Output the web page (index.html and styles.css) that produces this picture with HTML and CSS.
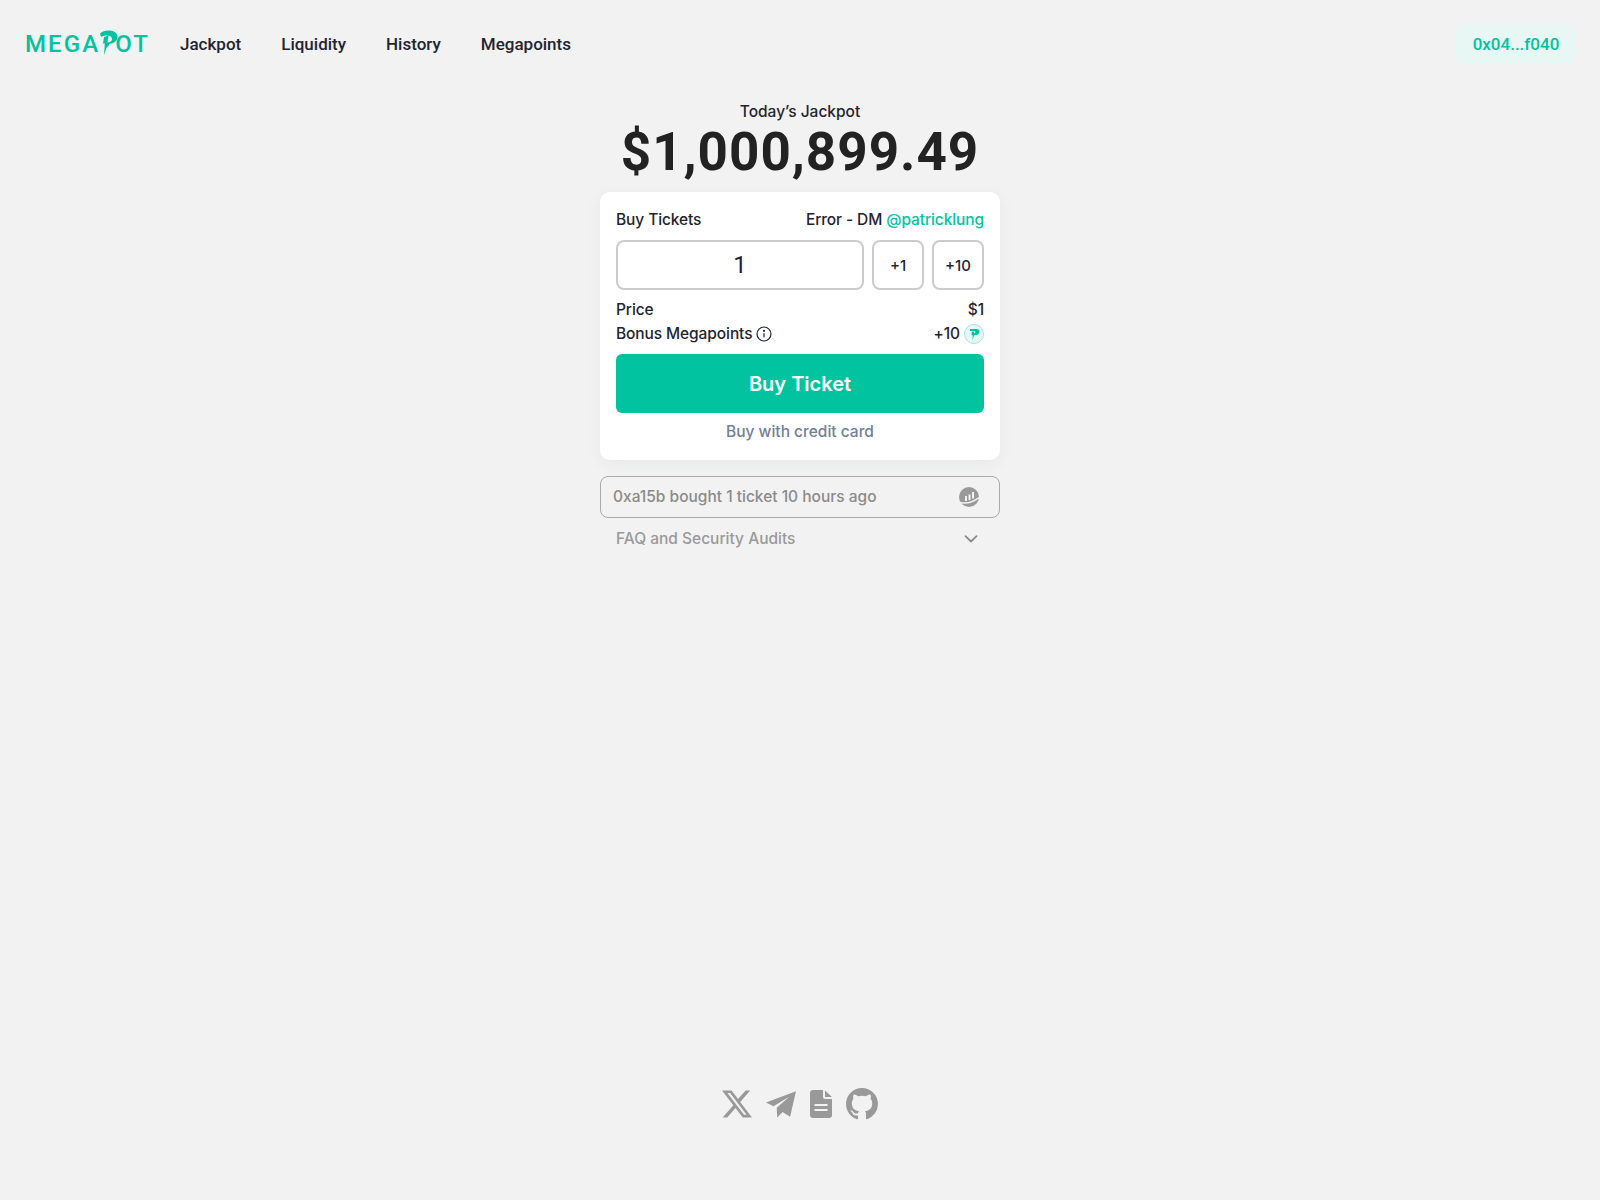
FILE: index.html
```html
<!DOCTYPE html>
<html lang="en">
<head>
<meta charset="utf-8">
<title>Megapot</title>
<link rel="stylesheet" href="styles.css">
</head>
<body>
<div class="page">
  <header class="topbar">
    <div class="brand">
      <a class="logo"><span>MEGA</span><svg class="logo-p" viewBox="0 0 20 26" width="20" height="26"><path fill="#02c39f" d="M1 3.5C3 1.500 6 .5 9.500.5c5.500 0 9 2.500 9 6.500 0 4-3.500 6.500-8 6.800l-1.500 3-1 0 .5-1.500-3.500 9.700.8-11.500-1.800 0 1-6.500 4.500-1.500-1 7c2.500-.2 4.500-1.500 4.500-3.500 0-2.500-2.500-3.500-5-3.500-2.500 0-4 .5-6 1.500z"/></svg><span class="logo-end">OT</span></a>
      <nav class="nav">
        <a>Jackpot</a>
        <a>Liquidity</a>
        <a>History</a>
        <a>Megapoints</a>
      </nav>
    </div>
    <button class="wallet">0x04...f040</button>
  </header>

  <main class="main">
    <div class="hero">
      <div class="hero-label">Today’s Jackpot</div>
      <div class="hero-amount">$1,000,899.49</div>
    </div>

    <section class="card">
      <div class="row row-head">
        <span>Buy Tickets</span>
        <span>Error - DM <a class="accent">@patricklung</a></span>
      </div>
      <div class="qty">
        <div class="qty-input">1</div>
        <button class="qty-btn">+1</button>
        <button class="qty-btn">+10</button>
      </div>
      <div class="row"><span>Price</span><span>$1</span></div>
      <div class="row">
        <span class="with-icon">Bonus Megapoints
          <svg class="info" viewBox="0 0 16 16" width="16" height="16" fill="none" stroke="#1f2430" stroke-width="1.200"><circle cx="8" cy="8" r="7"/><path d="M8 7.200v4"/><circle cx="8" cy="4.800" r=".5" fill="#1f2430"/></svg>
        </span>
        <span class="with-icon">+10
          <span class="point"><svg viewBox="0 0 20 20" width="20" height="20"><circle cx="10" cy="10" r="9.500" fill="#e6f9f5" stroke="#a5e6d9" stroke-width="1"/><path fill="#02c39f" d="M6 5h6.500c1.800 0 3 1 3 2.800 0 2-1.500 3.200-3.500 3.200l-2 .2-1.500 5 .2-5H7.500l.3-3.700H10l-.2 1.600c1 0 1.700-.3 1.700-1.100 0-.7-.6-1-1.500-1H6z"/></svg></span>
        </span>
      </div>
      <button class="buy">Buy Ticket</button>
      <a class="credit">Buy with credit card</a>
    </section>

    <div class="ticker">
      <span>0xa15b bought 1 ticket 10 hours ago</span>
      <svg viewBox="0 0 20 20" width="20" height="20"><circle cx="10" cy="10" r="10" fill="#999"/><path fill="#f2f2f2" d="M6 9h2v5H6zM9.500 7.500h2V13h-2zM13 5h2v6.500h-2z"/><path d="M1 15.500c6 1.500 12 .5 19-5" fill="none" stroke="#f2f2f2" stroke-width="1.500"/></svg>
    </div>
    <div class="faq">
      <span>FAQ and Security Audits</span>
      <svg viewBox="0 0 14 8" width="14" height="8" fill="none" stroke="#8a8a8a" stroke-width="1.800" stroke-linecap="round" stroke-linejoin="round"><path d="M1.500 1.200 7 6.500l5.500-5.300"/></svg>
    </div>
  </main>

  <footer class="footer">
    <svg class="fi" viewBox="0 0 24 24" width="30" height="30"><path d="M18.901 1.153h3.680l-8.040 9.190L24 22.846h-7.406l-5.800-7.584-6.638 7.584H.474l8.600-9.830L0 1.154h7.594l5.243 6.932ZM17.610 20.644h2.039L6.486 3.240H4.298Z"/></svg>
    <svg class="fi" viewBox="0 0 28 26" width="30" height="28"><path d="M0 11.500 28 1 22.500 25 15.500 20.500 10.500 25.500 10 16.500 22 6 7 15Z"/></svg>
    <svg class="fi fi-doc" viewBox="0 0 22 28" width="22" height="28"><path fill-rule="evenodd" d="M3 0h10v7a2 2 0 0 0 2 2h7v16a3 3 0 0 1-3 3H3a3 3 0 0 1-3-3V3a3 3 0 0 1 3-3Zm1.500 14v2h13v-2Zm0 5v2h13v-2ZM15 .5 22 7h-7Z"/></svg>
    <svg class="fi" viewBox="0 0 16 16" width="32" height="32"><path d="M8 0C3.580 0 0 3.580 0 8c0 3.540 2.290 6.530 5.470 7.590.4.070.55-.17.55-.38 0-.19-.01-.82-.01-1.490-2.010.37-2.530-.49-2.690-.94-.09-.23-.48-.94-.82-1.130-.28-.15-.68-.52-.01-.53.630-.01 1.080.58 1.230.82.720 1.210 1.870.87 2.330.66.070-.52.280-.87.510-1.070-1.780-.2-3.640-.89-3.640-3.950 0-.87.310-1.590.820-2.150-.08-.2-.36-1.020.08-2.120 0 0 .67-.21 2.200.82.640-.18 1.320-.27 2-.27.680 0 1.360.09 2 .27 1.530-1.040 2.200-.82 2.200-.82.440 1.100.160 1.920.080 2.120.510.560.820 1.270.820 2.150 0 3.070-1.870 3.750-3.650 3.950.290.250.540.730.540 1.480 0 1.070-.01 1.930-.01 2.200 0 .21.150.46.550.38A8.013 8.013 0 0 0 16 8c0-4.420-3.580-8-8-8z"/></svg>
  </footer>
</div>
</body>
</html>
```
FILE: styles.css
```css
* { box-sizing: border-box; }
html, body { margin: 0; padding: 0; }
body {
  background: #f2f2f2;
  color: #1f2430;
  font-family: "Inter", "Noto Sans", sans-serif;
  font-size: 16px;
  line-height: 24px;
}
.page {
  min-height: 1200px;
  display: flex;
  flex-direction: column;
}
.topbar {
  display: flex;
  justify-content: space-between;
  align-items: center;
  padding: 24px 24px 24px 25px;
  height: 87px;
}
.brand { display: flex; align-items: center; gap: 25px; }
.logo {
  display: flex;
  align-items: center;
  width: 130px;
  height: 26px;
  font-family: "Roboto", sans-serif;
  font-size: 24px;
  font-weight: 500;
  letter-spacing: 2.100px;
  color: #02c39f;
  line-height: 26px;
}
.logo-p { flex: none; margin-left: -1px; margin-top: -1px; }
.logo-end { margin-left: -4px; }
.nav { display: flex; gap: 40px; }
.nav a {
  font-family: "Roboto", sans-serif;
  font-size: 17px;
  font-weight: 500;
  color: #1f2430;
}
.wallet {
  width: 120px;
  height: 40px;
  border: 0;
  border-radius: 8px;
  background: #e8f7f4;
  color: #02c39f;
  font-family: "Roboto", sans-serif;
  font-size: 17px;
  font-weight: 500;
  padding: 0;
}
.main {
  width: 400px;
  margin: 0 auto;
  display: flex;
  flex-direction: column;
}
.hero { text-align: center; margin-top: 13px; }
.hero-label { font-weight: 500; font-size: 15.500px; line-height: 24px; }
.hero-amount {
  font-family: "Roboto", sans-serif;
  font-size: 53px;
  font-weight: 700;
  line-height: 56px;
  letter-spacing: 1px;
  color: #222;
}
.card {
  background: #fff;
  border-radius: 10px;
  padding: 16px;
  margin-top: 12px;
  height: 268px;
  display: flex;
  flex-direction: column;
  box-shadow: 0 4px 16px rgba(40, 50, 90, 0.05);
}
.row {
  display: flex;
  justify-content: space-between;
  align-items: center;
  height: 24px;
  font-size: 15.500px;
  font-weight: 500;
  letter-spacing: -0.100px;
}
.row-head { height: 24px; margin-bottom: 8px; }
.accent { color: #02c39f; }
.qty { display: flex; gap: 8px; margin-bottom: 8px; }
.qty-input, .qty-btn {
  height: 50px;
  border: 2px solid #ccc;
  border-radius: 8px;
  background: #fff;
  display: flex;
  align-items: center;
  justify-content: center;
  color: #1f2430;
}
.qty-input { flex: 1; font-size: 24px; font-family: "Roboto", sans-serif; }
.qty-btn { width: 52px; padding: 0; font-size: 15px; font-weight: 500; font-family: "Inter", sans-serif; }
.with-icon { display: flex; align-items: center; gap: 4px; }
.info { flex: none; }
.point { display: flex; }
.buy {
  height: 60px;
  margin-top: 8px;
  border: 0;
  border-radius: 6px;
  background: #02c39f;
  color: #fff;
  font-family: "Inter", sans-serif;
  font-size: 20px;
  font-weight: 600;
}
.credit {
  text-align: center;
  margin-top: 7px;
  color: #718096;
  font-size: 15.500px;
  font-weight: 500;
}
.ticker {
  margin-top: 16px;
  height: 42px;
  border: 1px solid #aaa;
  border-radius: 8px;
  padding: 0 20px 0 12px;
  display: flex;
  align-items: center;
  justify-content: space-between;
  color: #8a8a8a;
  font-size: 15.500px;
  font-weight: 500;
}
.faq {
  display: flex;
  align-items: center;
  justify-content: space-between;
  padding: 0 22px 0 16px;
  margin-top: 9px;
  color: #999;
  font-size: 15.500px;
  font-weight: 500;
}
.footer {
  margin-top: auto;
  margin-bottom: 80px;
  display: flex;
  justify-content: center;
  align-items: center;
  gap: 14px;
}
.fi { fill: #999; flex: none; }
```
